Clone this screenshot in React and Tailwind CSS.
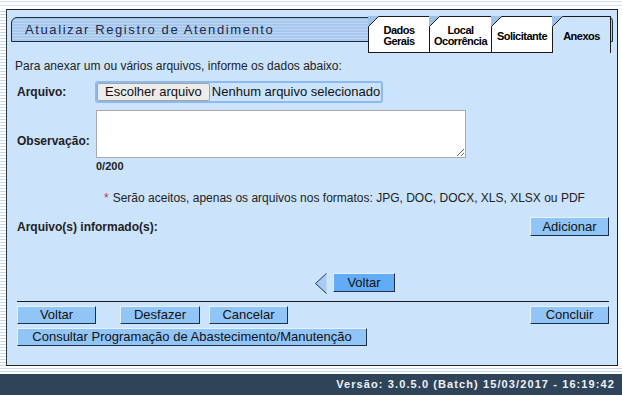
import React from 'react';

const btn =
  'h-[18px] bg-[#92c5f7] border border-t-[#e6f1ff] border-l-[#e6f1ff] border-b-[#1f2f48] border-r-[#1f2f48] text-[13px] leading-[16px] text-[#111] text-center';

function TabCorner() {
  return (
    <svg className="absolute -left-px -top-px" width="11" height="11" viewBox="0 0 11 11">
      <polygon points="0,0 11,0 0,11" fill="#9ec1ea" />
      <line x1="10.5" y1="0.5" x2="0.5" y2="10.5" stroke="#1a1a1a" strokeWidth="1" />
    </svg>
  );
}

function Tab({ left, width, active, children }) {
  return (
    <div
      className={`absolute top-0 h-[37px] flex items-center justify-center text-center text-black border-l border-r border-t border-[#1a1a1a] ${
        active ? 'bg-[#cbe3fb]' : 'bg-white border-b'
      }`}
      style={{ left, width }}
    >
      <TabCorner />
      <div className="pt-[3px] font-bold text-[11px] leading-[11px] tracking-[-0.5px]">{children}</div>
    </div>
  );
}

export default function App() {
  return (
    <div className="w-[622px] h-[395px] bg-white flex flex-col overflow-hidden font-['Liberation_Sans',Arial,sans-serif]">
      <div className="h-[9px] flex flex-col">
        <div className="h-[1px] mt-[1px] bg-[#d2e2f0]" />
        <div className="h-[1px] mt-[3px] bg-[#d2e2f0]" />
      </div>

      <div className="flex h-[357px]">
        <div className="w-[7px] border-r border-[#333] bg-[repeating-linear-gradient(180deg,#ffffff_0px,#ffffff_2px,#c6d9ec_2px,#c6d9ec_3px)]" />
        <div className="w-[611px] bg-[#cbe3fb] border-t border-r border-b border-[#222] flex flex-col">
          {/* header */}
          <div className="relative h-[43px] pt-[6px]">
            <div className="ml-[4px] mt-[1px] w-[602px] h-[25px] border border-[#1b2a40] rounded-tl-[6px] rounded-tr-[4px] bg-[repeating-linear-gradient(180deg,#a7c7ec_0px,#a7c7ec_2px,#bdd6f3_2px,#bdd6f3_3px)] flex items-center pl-[13px]">
              <span className="text-[13px] tracking-[1.6px] text-[#1b2a50]">Atualizar Registro de Atendimento</span>
            </div>
            <div className="absolute top-[6px] left-0 w-full">
              <Tab left={361} width={62}>
                Dados
                <br />
                Gerais
              </Tab>
              <Tab left={422} width={63}>
                Local
                <br />
                Ocorrência
              </Tab>
              <Tab left={484} width={62}>
                Solicitante
              </Tab>
              <Tab left={545} width={59} active>
                Anexos
              </Tab>
            </div>
          </div>

          {/* body */}
          <div className="pl-[8px] pr-[8px] text-[#222]">
            <div className="mt-[6px] text-[12px] leading-[14px]">
              Para anexar um ou vários arquivos, informe os dados abaixo:
            </div>

            <div className="flex items-center mt-[8px] h-[22px]">
              <div className="w-[80px] pl-[2px] font-bold text-[12px]">Arquivo:</div>
              <div className="flex items-center h-[22px] border-2 border-[#8db9ec] rounded-[3px] pr-[1px]">
                <div className="h-[18px] px-[7px] bg-[#ececec] border border-[#a3a3a3] rounded-[2px] text-[13px] leading-[16px] text-[#111]">
                  Escolher arquivo
                </div>
                <span className="ml-[2px] text-[13px] leading-[16px] text-[#111]">Nenhum arquivo selecionado</span>
              </div>
            </div>

            <div className="flex mt-[7px]">
              <div className="w-[81px] pl-[2px] pt-[24px] font-bold text-[12px] leading-[14px]">Observação:</div>
              <div className="flex flex-col">
                <textarea
                  className="w-[370px] h-[48px] bg-white border border-[#a9a9a9] resize-y block"
                  defaultValue=""
                />
                <div className="mt-[2px] font-bold text-[11px] leading-[13px]">0/200</div>
              </div>
            </div>

            <div className="mt-[18px] ml-[89px] text-[12px] leading-[14px]">
              <span className="text-[#d03030] mr-[4px]">*</span>
              Serão aceitos, apenas os arquivos nos formatos: JPG, DOC, DOCX, XLS, XLSX ou PDF
            </div>

            <div className="flex items-center justify-between mt-[12px] pl-[2px]">
              <div className="font-bold text-[12px]">Arquivo(s) informado(s):</div>
              <button className={`${btn} w-[79px] h-[19px]`}>Adicionar</button>
            </div>

            <div className="flex items-center mt-[37px] ml-[300px]">
              <svg width="12" height="21" viewBox="0 0 12 21">
                <polygon points="11.5,0.5 0.5,10.5 11.5,20.5" fill="#a9cdf2" />
                <polyline points="11.5,0.5 0.5,10.5 11.5,20.5" fill="none" stroke="#1e3358" strokeWidth="1" />
              </svg>
              <button className="ml-[6px] h-[19px] w-[62px] bg-[#62acf7] border border-t-[#e6f1ff] border-l-[#e6f1ff] border-b-[#1f2f48] border-r-[#1f2f48] text-[13px] leading-[16px] text-[#111] mt-[-2px]">
                Voltar
              </button>
            </div>

            <div className="ml-[2px] mt-[7px] h-[1px] bg-[#1a1a1a]" />

            <div className="ml-[2px] mt-[4px] flex">
              <button className={`${btn} w-[79px]`}>Voltar</button>
              <button className={`${btn} w-[80px] ml-[24px]`}>Desfazer</button>
              <button className={`${btn} w-[79px] ml-[9px]`}>Cancelar</button>
              <button className={`${btn} w-[79px] ml-auto`}>Concluir</button>
            </div>
            <div className="ml-[2px] mt-[4px] flex">
              <button className={`${btn} w-[350px]`}>Consultar Programação de Abastecimento/Manutenção</button>
            </div>
          </div>
        </div>
        <div className="flex-1" />
      </div>

      <div className="h-[8px] flex flex-col">
        <div className="h-[1px] mt-[2px] bg-[#c8dbec]" />
        <div className="h-[1px] mt-[2px] bg-[#c8dbec]" />
      </div>
      <div className="flex-1 bg-[#2f4459] flex items-center justify-end pr-[7px]">
        <span className="text-[11px] font-bold tracking-[1.1px] text-[#eef2f6]">
          Versão: 3.0.5.0 (Batch) 15/03/2017 - 16:19:42
        </span>
      </div>
    </div>
  );
}
